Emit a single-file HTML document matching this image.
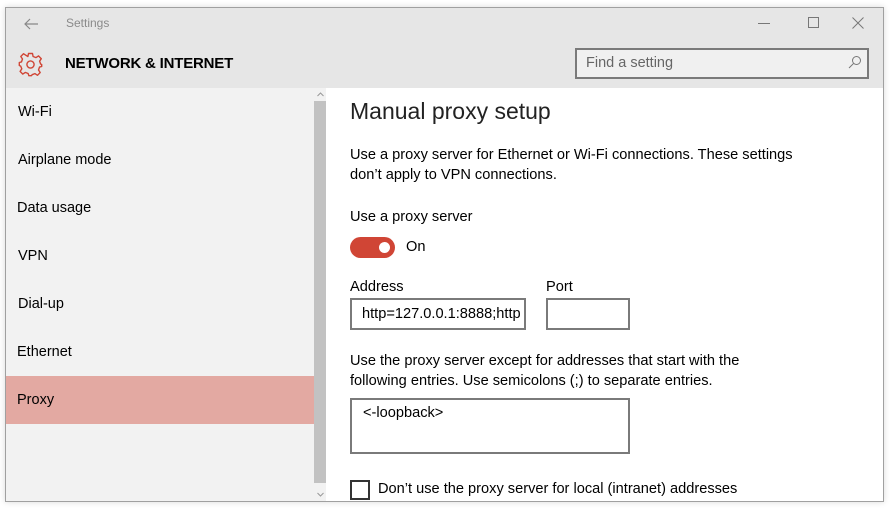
<!DOCTYPE html>
<html><head><style>
*{margin:0;padding:0;box-sizing:border-box}
body{width:890px;height:512px;background:#fff;font-family:"Liberation Sans",sans-serif;color:#000;position:relative;overflow:hidden}
.win{position:absolute;left:5px;top:7px;width:879px;height:495px;border:1px solid #a0a0a0;background:#fff;box-shadow:0 0 6px rgba(0,0,0,.15);overflow:hidden}
.t{position:absolute;white-space:nowrap}
.hdr{position:absolute;left:0;top:0;width:877px;height:80px;background:#e6e6e6}
.side{position:absolute;left:0;top:80px;width:308px;height:415px;background:#f2f2f2}
.sb{position:absolute;left:308px;top:80px;width:12px;height:415px;background:#f2f2f2}
.thumb{position:absolute;left:308px;top:93px;width:12px;height:382px;background:#c2c2c2}
.item{position:absolute;left:12px;font-size:14.5px}
.box{position:absolute;border:2px solid #7a7a7a;background:#fff}
.c{font-size:14.6px}
</style></head><body>
<div class="win">
<div class="hdr"></div>
<svg class="t" style="left:17px;top:9px" width="16" height="14"><path d="M15 7H2M7 2L2 7l5 5" stroke="#888" fill="none" stroke-width="1.2"/></svg>
<div class="t" style="left:60px;top:8px;font-size:12px;color:#8a8a8a">Settings</div>
<div class="t" style="left:752px;top:15px;width:12px;height:1px;background:#777"></div>
<div class="t" style="left:802px;top:9px;width:11px;height:11px;border:1px solid #777"></div>
<svg class="t" style="left:846px;top:9px" width="12" height="12"><path d="M0.5 0.5l11 11M11.5 0.5l-11 11" stroke="#777" stroke-width="1"/></svg>
<svg class="t" style="left:12px;top:44px" width="25" height="25" viewBox="-12.5 -12.5 25 25"><path d="M-2,-11 L2,-11 L2.6,-8 L5.5,-6.9 L8,-8.6 L10.8,-5.8 L9.1,-3.3 L10.2,-0.4 L11.2,0 L11.2,2 L9,2.6 L8,5.5 L9.7,8 L7,10.8 L4.4,9.1 L1.6,10.2 L1,11.2 L-1.6,11.2 L-2.4,9 L-5.2,7.9 L-7.7,9.6 L-10.4,6.9 L-8.7,4.4 L-9.8,1.6 L-11.2,1 L-11.2,-2 L-9,-2.6 L-8,-5.5 L-9.7,-8 L-7,-10.8 L-4.4,-9.1 L-2.6,-8 Z" fill="none" stroke="#d04535" stroke-width="1.4" stroke-linejoin="round"/><circle r="3.6" fill="none" stroke="#d04535" stroke-width="1.4"/></svg>
<div class="t" style="left:59px;top:47px;font-size:15px;font-weight:bold;letter-spacing:-0.2px">NETWORK &amp; INTERNET</div>
<div class="box" style="left:569px;top:40px;width:294px;height:31px;background:#f0f0f0;border-color:#7a7a7a"></div>
<div class="t" style="left:580px;top:47px;font-size:14.5px;color:#666">Find a setting</div>
<svg class="t" style="left:842px;top:47px" width="14" height="14"><circle cx="8.5" cy="5.5" r="4" fill="none" stroke="#777"/><path d="M5.5 8.5L1 13" stroke="#777"/></svg>
<div class="side"></div>
<div class="sb"></div>
<div class="thumb"></div>
<svg class="t" style="left:311px;top:84px" width="7" height="5"><path d="M0.5 4L3.5 1L6.5 4" stroke="#999" fill="none"/></svg>
<svg class="t" style="left:311px;top:484px" width="7" height="5"><path d="M0.5 1L3.5 4L6.5 1" stroke="#999" fill="none"/></svg>
<div class="item" style="top:96px">Wi-Fi</div>
<div class="item" style="top:144px">Airplane mode</div>
<div class="item" style="left:11px;top:192px">Data usage</div>
<div class="item" style="top:240px">VPN</div>
<div class="item" style="top:288px">Dial-up</div>
<div class="item" style="left:11px;top:336px">Ethernet</div>
<div class="t" style="left:0;top:368px;width:308px;height:48px;background:#e3a9a2"></div>
<div class="item" style="left:11px;top:384px">Proxy</div>

<div class="t" style="left:344px;top:90px;font-size:23px;color:#222">Manual proxy setup</div>
<div class="t c" style="left:344px;top:137px;line-height:20px">Use a proxy server for Ethernet or Wi-Fi connections. These settings<br>don’t apply to VPN connections.</div>
<div class="t c" style="left:344px;top:201px">Use a proxy server</div>
<div class="t" style="left:344px;top:229px;width:45px;height:21px;border-radius:11px;background:#d04535"></div>
<div class="t" style="left:373px;top:234px;width:11px;height:11px;border-radius:6px;background:#fff"></div>
<div class="t c" style="left:400px;top:231px">On</div>
<div class="t c" style="left:344px;top:271px">Address</div>
<div class="t c" style="left:540px;top:271px">Port</div>
<div class="box" style="left:344px;top:290px;width:176px;height:32px;overflow:hidden"><div class="t c" style="left:10px;top:6px">http=127.0.0.1:8888;http</div></div>
<div class="box" style="left:540px;top:290px;width:84px;height:32px"></div>
<div class="t c" style="left:344px;top:343px;line-height:20px">Use the proxy server except for addresses that start with the<br>following entries. Use semicolons (;) to separate entries.</div>
<div class="box" style="left:344px;top:390px;width:280px;height:56px"><div class="t c" style="left:11px;top:5px">&lt;-loopback&gt;</div></div>
<div class="t" style="left:344px;top:472px;width:20px;height:20px;border:2px solid #333"></div>
<div class="t c" style="left:372px;top:473px">Don’t use the proxy server for local (intranet) addresses</div>
</div>
</body></html>
